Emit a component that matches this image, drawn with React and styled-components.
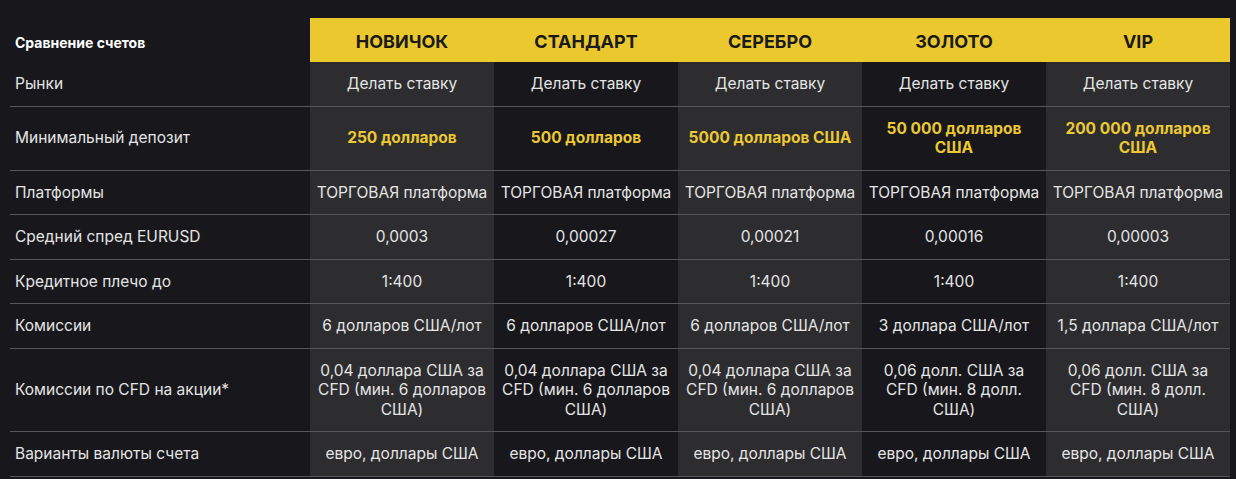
import React from 'react'
import styled, {createGlobalStyle} from 'styled-components'

const GlobalStyle = createGlobalStyle`
    body {
        margin: 0;
        background: #18181c;
        font-family: Inter, "Noto Sans", "Liberation Sans", sans-serif;
    }
`

const plans = ['НОВИЧОК', 'СТАНДАРТ', 'СЕРЕБРО', 'ЗОЛОТО', 'VIP']

const rows = [
    {label: 'Рынки', values: Array(5).fill('Делать ставку')},
    {label: 'Минимальный депозит', accent: true, values: ['250 долларов', '500 долларов', '5000 долларов США', '50 000 долларов США', '200 000 долларов США']},
    {label: 'Платформы', values: Array(5).fill('ТОРГОВАЯ платформа')},
    {label: 'Средний спред EURUSD', values: ['0,0003', '0,00027', '0,00021', '0,00016', '0,00003']},
    {label: 'Кредитное плечо до', values: Array(5).fill('1:400')},
    {label: 'Комиссии', values: ['6 долларов США/лот', '6 долларов США/лот', '6 долларов США/лот', '3 доллара США/лот', '1,5 доллара США/лот']},
    {label: 'Комиссии по CFD на акции*', values: [
        '0,04 доллара США за CFD (мин. 6 долларов США)',
        '0,04 доллара США за CFD (мин. 6 долларов США)',
        '0,04 доллара США за CFD (мин. 6 долларов США)',
        '0,06 долл. США за CFD (мин. 8 долл. США)',
        '0,06 долл. США за CFD (мин. 8 долл. США)',
    ]},
    {label: 'Варианты валюты счета', values: Array(5).fill('евро, доллары США')},
]

const App = () => {
    return (
        <Page>
            <GlobalStyle/>
            <Table>
                <colgroup>
                    <col style={{width: 300}}/>
                    {plans.map(p => <col key={p} style={{width: 184}}/>)}
                </colgroup>
                <thead>
                    <tr>
                        <Corner>Сравнение счетов</Corner>
                        {plans.map(p => <PlanHead key={p}>{p}</PlanHead>)}
                    </tr>
                </thead>
                <tbody>
                    {rows.map((row, i) => (
                        <Row key={i} $first={i === 0}>
                            <Label>{row.label}</Label>
                            {row.values.map((v, j) => (
                                <Cell key={j} $shade={j % 2 === 0} $accent={row.accent}>{v}</Cell>
                            ))}
                        </Row>
                    ))}
                </tbody>
            </Table>
        </Page>
    )
}

export default App

const Page = styled.div`
    padding: 18px 6px 0 10px;
    min-height: 479px;
    box-sizing: border-box;
`

const Table = styled.table`
    width: 1220px;
    border-collapse: collapse;
    table-layout: fixed;
`

const Corner = styled.th`
    box-sizing: border-box;
    text-align: left;
    padding: 4px 5px 0;
    height: 44px;
    font-size: 14px;
    font-weight: 700;
    color: #ffffff;
`

const PlanHead = styled.th`
    box-sizing: border-box;
    background: #ebc92e;
    color: #1a1a1a;
    height: 44px;
    padding: 3px 0 0;
    font-size: 18px;
    font-weight: 700;
    text-align: center;
`

const Row = styled.tr`
    border-top: ${p => p.$first ? 'none' : '1px solid #55555a'};
    border-bottom: 1px solid #55555a;
`

const Label = styled.td`
    padding: 12px 5px;
    font-size: 15.5px;
    line-height: 19.5px;
    color: #e4e4e4;
`

const Cell = styled.td`
    padding: 12px 5px;
    text-align: center;
    font-size: 15.5px;
    line-height: 19.5px;
    background: ${p => p.$shade ? '#2d2d2f' : 'transparent'};
    color: ${p => p.$accent ? '#ecc832' : '#e4e4e4'};
    font-weight: ${p => p.$accent ? 700 : 400};
`
